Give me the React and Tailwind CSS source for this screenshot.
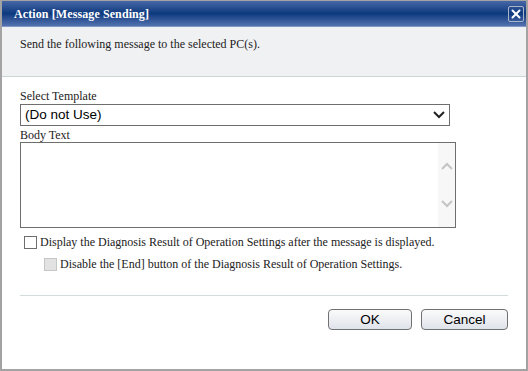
import { X } from 'lucide-react';

const serif = { fontFamily: '"Liberation Serif", "Times New Roman", serif' };
const sans = { fontFamily: '"Liberation Sans", Arial, sans-serif' };

const Chevron = ({ up, className }) => (
  <svg width="12" height="8" viewBox="0 0 12 8" className={className}>
    <path d={up ? 'M1 7 L6 2 L11 7' : 'M1 1 L6 6 L11 1'} fill="none" stroke="currentColor" strokeWidth="2" />
  </svg>
);

export default function App() {
  return (
    <div className="w-[528px] h-[371px] bg-white border-t border-x-2 border-b-2 border-[#a3a3a3] flex flex-col text-[#222]"
      style={serif}>
      {/* Title bar */}
      <div className="h-[26px] shrink-0 flex items-center justify-between pl-[12px] pr-[2px] bg-linear-to-b from-[#4767a6] via-[#0b3a7e] to-[#5472b0] border-b border-[#7f97c6]">
        <span className="text-white font-bold text-[12px] tracking-[0.1px]">Action [Message Sending]</span>
        <button className="w-[16px] h-[16px] flex items-center justify-center border border-[#aab4c8] rounded-[2px] text-white">
          <X size={14} strokeWidth={3.4} />
        </button>
      </div>

      {/* Header */}
      <div className="h-[50px] shrink-0 bg-[#f0f1f3] border-b border-[#cdd6d6] px-[18px] pt-[8px] text-[12px]">
        Send the following message to the selected PC(s).
      </div>

      {/* Body */}
      <div className="flex-1 px-[18px] pt-[12px] flex flex-col text-[12px]">
        <div className="leading-[14px]">Select Template</div>
        <div className="mt-[1px] w-[430px] h-[22px] border border-[#6e6e6e] flex items-center justify-between pl-[4px] pr-[4px]">
          <span className="text-[13.5px] text-black" style={sans}>(Do not Use)</span>
          <Chevron className="text-[#222]" />
        </div>
        <div className="leading-[14px] mt-[2px]">Body Text</div>
        <div className="w-[436px] h-[86px] border border-[#6e6e6e] flex justify-end">
          <div className="w-[17px] h-full bg-[#f7f7f7] flex flex-col items-center justify-between py-[19px] text-[#c4c4c4]">
            <Chevron up />
            <Chevron />
          </div>
        </div>

        <label className="flex items-center mt-[7px] pl-[4px] h-[14px]">
          <span className="w-[13px] h-[13px] border border-[#6e6e6e] bg-white mr-[3px]" />
          <span>Display the Diagnosis Result of Operation Settings after the message is displayed.</span>
        </label>
        <label className="flex items-center mt-[8px] pl-[24px] h-[14px]">
          <span className="w-[13px] h-[13px] border border-[#c6c6c6] bg-[#e2e2e2] mr-[3px]" />
          <span>Disable the [End] button of the Diagnosis Result of Operation Settings.</span>
        </label>

        <div className="mt-[24px] border-t border-[#d2dcdc]" />

        <div className="flex justify-end gap-[9px] mt-[13px]">
          {['OK', 'Cancel'].map((t, i) => (
            <button key={t}
              className={`${i === 0 ? 'w-[84px]' : 'w-[87px]'} h-[21px] rounded-[4px] border border-[#707070] bg-linear-to-b from-[#fbfbfb] to-[#dfe3ea] text-[13.5px] text-black leading-none`}
              style={sans}>
              {t}
            </button>
          ))}
        </div>
      </div>
    </div>
  );
}
